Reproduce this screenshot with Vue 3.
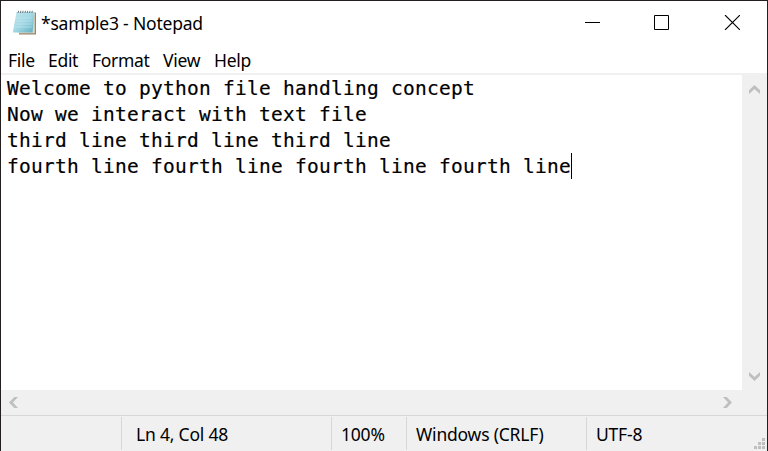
<script setup>
const menus = [
  { label: 'File', cls: 'm-file' },
  { label: 'Edit', cls: 'm-edit' },
  { label: 'Format', cls: 'm-format' },
  { label: 'View', cls: 'm-view' },
  { label: 'Help', cls: 'm-help' },
]
const lines = [
  'Welcome to python file handling concept',
  'Now we interact with text file',
  'third line third line third line',
  'fourth line fourth line fourth line fourth line',
]
const rings = [0, 1, 2, 3, 4, 5, 6]
</script>

<template>
  <div class="window">
    <header class="titlebar">
      <svg class="app-icon" width="26" height="26" viewBox="0 0 26 26">
        <defs>
          <linearGradient id="page" x1="0" y1="0" x2="1" y2="1">
            <stop offset="0" stop-color="#c3e6ed" />
            <stop offset="0.5" stop-color="#a2d8e4" />
            <stop offset="1" stop-color="#5faec2" />
          </linearGradient>
        </defs>
        <path d="M7 2.5H24V24.5H7Z" fill="#94856b" />
        <path d="M6.5 2.5H22.8V23.3H6.5Z" fill="#ded6c3" />
        <path d="M4.5 2H22.5L20.6 22.6H0.8Z" fill="url(#page)" />
        <path d="M4.5 8H20.5M4 11H20.3M3.5 14H20M3 17H19.6" stroke="#c6e9f0" stroke-width="0.6" />
        <path v-for="r in rings" :key="r" :d="`M${6 + r * 2.3} 3l0.6 -2.2`" stroke="#6b777c" stroke-width="1" />
      </svg>
      <span class="title">*sample3 - Notepad</span>
      <svg class="controls" width="155" height="15" viewBox="0 0 155 15" fill="none" stroke="#000">
        <path d="M0 7.5H15" />
        <path d="M69.5 0.5H83.5V14.5H69.5Z" />
        <path d="M140 0L155 15M155 0L140 15" stroke-width="1.1" />
      </svg>
    </header>

    <nav class="menubar">
      <span v-for="m in menus" :key="m.label" :class="m.cls">{{ m.label }}</span>
    </nav>

    <main class="workspace">
      <div class="editor">
        <div v-for="(line, i) in lines" :key="i" class="line">
          <span>{{ line }}</span><i v-if="i === lines.length - 1" class="caret"></i>
        </div>
      </div>
      <div class="vscroll">
        <svg width="11" height="9" viewBox="0 0 11 9"><path d="M0 5.3L5.5 0L11 5.3V9L5.5 3.9L0 9Z" /></svg>
        <svg width="11" height="9" viewBox="0 0 11 9"><path d="M0 3.7L5.5 9L11 3.7V0L5.5 5.1L0 0Z" /></svg>
      </div>
    </main>

    <div class="hscroll">
      <svg width="9" height="11" viewBox="0 0 9 11"><path d="M5.3 0L0 5.5L5.3 11H9L3.9 5.5L9 0Z" /></svg>
      <svg width="9" height="11" viewBox="0 0 9 11"><path d="M3.7 0L9 5.5L3.7 11H0L5.1 5.5L0 0Z" /></svg>
    </div>

    <footer class="statusbar">
      <div class="cell blank"></div>
      <div class="cell pos"><span>Ln 4, Col 48</span></div>
      <div class="cell zoom"><span>100%</span></div>
      <div class="cell eol"><span>Windows (CRLF)</span></div>
      <div class="cell enc"><span>UTF-8</span></div>
      <svg class="grip" width="11" height="11" viewBox="0 0 11 11" fill="#bfbfbf">
        <path d="M8 0h3v3h-3zM4 4h3v3h-3zM8 4h3v3h-3zM0 8h3v3h-3zM4 8h3v3h-3zM8 8h3v3h-3z" />
      </svg>
    </footer>
  </div>
</template>

<style>
body {
  margin: 0;
  overflow: hidden;
}
</style>

<style scoped>
.window {
  box-sizing: border-box;
  width: 768px;
  height: 451px;
  border: 1px solid #231f20;
  border-bottom: 0;
  background: #fff;
  color: #000;
  font-family: "Noto Sans", "Open Sans", sans-serif;
  font-size: 17.5px;
  display: flex;
  flex-direction: column;
  white-space: pre;
  overflow: hidden;
}
.titlebar {
  flex-shrink: 0;
  height: 44px;
  display: flex;
  align-items: center;
  padding: 0 27px 0 11px;
}
.app-icon {
  margin-top: -1px;
}
.title {
  margin-left: 3px;
  letter-spacing: -0.2px;
}
.controls {
  margin-left: auto;
  margin-top: -1px;
}
.menubar {
  flex-shrink: 0;
  height: 28px;
  box-sizing: border-box;
  padding-left: 7px;
  display: flex;
  line-height: 30px;
  letter-spacing: -0.3px;
}
.m-file { width: 40px; }
.m-edit { width: 44px; }
.m-format { width: 71px; }
.m-view { width: 51px; }
.workspace {
  flex-shrink: 0;
  box-sizing: border-box;
  height: 317px;
  border-top: 2px solid #f0f0f0;
  display: flex;
}
.editor {
  flex: 1;
  padding: 0 0 0 6px;
  font-family: "DejaVu Sans Mono", monospace;
  font-size: 19.5px;
  letter-spacing: 0.26px;
  -webkit-text-stroke: 0.2px #000;
}
.line {
  height: 26px;
  line-height: 27px;
  display: flex;
}
.caret {
  width: 1px;
  height: 26px;
  background: #000;
}
.vscroll {
  box-sizing: border-box;
  width: 25px;
  padding: 10px 7px 9px;
  background: #f0f0f0;
  display: flex;
  flex-direction: column;
  justify-content: space-between;
}
.vscroll path,
.hscroll path {
  fill: #bfbfbf;
}
.hscroll {
  flex-shrink: 0;
  box-sizing: border-box;
  height: 25px;
  padding: 0 35px 0 8px;
  background: #f0f0f0;
  display: flex;
  align-items: center;
  justify-content: space-between;
}
.statusbar {
  flex-shrink: 0;
  height: 36px;
  box-sizing: border-box;
  border-top: 1px solid #d7d7d7;
  padding: 1px 2px 1px 0;
  background: #f0f0f0;
  display: flex;
}
.cell {
  box-sizing: border-box;
  border-right: 1px solid #d7d7d7;
  line-height: 35px;
  letter-spacing: -0.2px;
}
.blank { width: 121px; }
.pos { width: 210px; padding-left: 14px; }
.zoom { width: 75px; padding-left: 9px; }
.eol { width: 180px; padding-left: 9px; }
.enc { flex: 1; padding-left: 9px; border-right: 0; }
.grip {
  align-self: flex-end;
  margin-bottom: 1px;
}
</style>
